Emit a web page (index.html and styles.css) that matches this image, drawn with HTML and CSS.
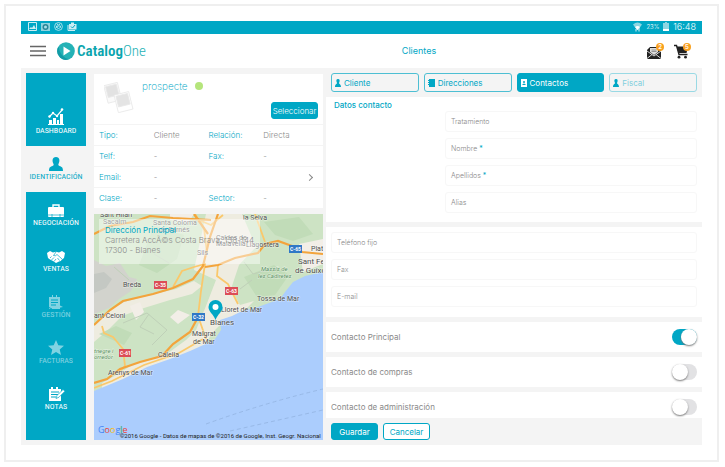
FILE: index.html
```html
<!DOCTYPE html>
<html lang="es">
<head>
<meta charset="utf-8">
<meta name="viewport" content="width=device-width, initial-scale=1">
<title>CatalogOne - Clientes</title>
<link rel="stylesheet" href="styles.css">
</head>
<body>
<div class="frame">
<div class="app">
  <div class="status">
    <div class="status-group">
      <svg width="9" height="9" viewBox="0 0 9 9"><path d="M.5.5h8v8h-8z" fill="none" stroke="#fff"/><path d="M1 7l2-2 1 1 2-3 2 4z" fill="#fff"/></svg>
      <svg width="9" height="9" viewBox="0 0 9 9"><path d="M0 1h9v8H0z" fill="#b5dfe6"/><circle cx="4.500" cy="5" r="3" fill="#347f8d"/><circle cx="4.500" cy="5" r="1.500" fill="#d6eef2"/></svg>
      <svg width="9" height="9" viewBox="0 0 9 9" fill="none" stroke="#fff"><circle cx="4.500" cy="4.500" r="3.900" stroke-width=".8"/><path d="M3 2l1 1h1l1-1M2.500 5.500V4h4v1.500q-2 2-4 0zM3 4v2" stroke-width=".8"/></svg>
      <svg width="10" height="9" viewBox="0 0 10 9"><path d="M1 3v5.500h7" fill="none" stroke="#fff"/><path d="M2 2h2V.5h3V2h2.500v5.500H2z" fill="#fff"/><path d="M4 4.500L5.500 6 8 3" fill="none" stroke="#00a7c5"/></svg>
    </div>
    <div class="status-group">
      <svg width="9" height="10" viewBox="0 0 9 10"><path d="M0 2.500Q4.500-1.500 9 2.500L5 8H4z" fill="#8ed6e2"/><path d="M2 5q2.500-2 5 0L4.500 8z" fill="#fff"/><path d="M3 7v2.500M6 6v3.500" stroke="#d8f2f5"/></svg>
      <span class="battery-text">23%</span>
      <svg width="6" height="9" viewBox="0 0 6 9"><path d="M2 0h2v1h2v8H0V1h2z" fill="#8ed6e2"/><path d="M0 7h6v2H0z" fill="#fff"/></svg>
      <span class="clock">16:48</span>
    </div>
  </div>

  <header class="header">
    <div class="brand">
      <button class="icon-button" aria-label="Menú"><svg width="16" height="12" viewBox="0 0 16 12" stroke="#666" stroke-width="1.500"><path d="M0 1.500h16M0 6h16M0 10.500h16"/></svg></button>
      <svg width="18" height="18" viewBox="0 0 18 18"><circle cx="9" cy="9" r="8.800" fill="#25b2b6"/><path d="M1.500 4.500A8.800 8.800 0 0 0 12 17.300Q3 15 1.500 4.500z" fill="#129ba6"/><path d="M6.500 4.500v9l7-4.500z" fill="#fff"/></svg>
      <span class="wordmark"><b>Catalog</b>One</span>
    </div>
    <h1 class="title">Clientes</h1>
    <div class="actions">
      <button class="icon-button" aria-label="Mensajes">
        <svg width="14" height="15" viewBox="0 0 14 15"><path d="M0 6l3-3h8l3 3v9H0z" fill="#222"/><path d="M3 4h8v4L7 11 3 8z" fill="#ddd"/><path d="M0 7l7 5 7-5M0 14.500l5-4M14 14.500l-5-4" fill="none" stroke="#fff" stroke-width=".8"/><path d="M4.500 6h5M4.500 7.500h5" stroke="#666" stroke-width=".6"/></svg>
        <span class="badge">2</span>
      </button>
      <button class="icon-button" aria-label="Carrito">
        <svg width="14" height="15" viewBox="0 0 14 15"><path d="M0 1.500h2.500L5 10.500h8.500" fill="none" stroke="#222" stroke-width="1.400"/><path d="M2.700 2.500H14L12.500 9H4.500z" fill="#222"/><circle cx="5" cy="13.200" r="1.400" fill="#222"/><circle cx="11.500" cy="13.200" r="1.400" fill="#222"/></svg>
        <span class="badge">5</span>
      </button>
    </div>
  </header>

  <div class="body">
    <nav class="sidebar">
      <a class="nav-item nav-first" href="#">
        <svg width="16" height="17" viewBox="0 0 16 17"><path d="M1 12h3v4H1zM5 10h3v6H5zM9 12h2v4H9zM12 6h3v10h-3z" fill="#fff"/><path d="M1 9l4-4 4 3 5-6" fill="none" stroke="#fff" stroke-width="1.200"/><g fill="#fff"><circle cx="1.500" cy="8.500" r="1.200"/><circle cx="5" cy="5" r="1.200"/><circle cx="9" cy="8" r="1.200"/><circle cx="14" cy="1.500" r="1.300"/></g><path d="M0 16.500h16" stroke="#fff"/></svg>
        <span>DASHBOARD</span></a>
      <a class="nav-item nav-active" href="#">
        <svg width="14" height="14" viewBox="0 0 14 14"><path d="M7 0c4 0 4 4 2.500 7-.5 1 0 1.500 1 2 2 .8 3.500 1 3.500 5H0c0-4 1.500-4.200 3.500-5 1-.5 1.500-1 1-2C3 4 3 0 7 0z" fill="currentColor"/></svg>
        <span>IDENTIFICACIÓN</span></a>
      <a class="nav-item" href="#">
        <svg width="16" height="13" viewBox="0 0 16 13"><path d="M5 3V1h6v2" fill="none" stroke="#fff" stroke-width="1.400"/><rect y="3" width="16" height="10" rx="1" fill="#fff"/><path d="M0 11h16M4 10v3M12 10v3" stroke="#00a7c5" stroke-width=".7"/></svg>
        <span>NEGOCIACIÓN</span></a>
      <a class="nav-item" href="#">
        <svg width="18" height="12" viewBox="0 0 18 12"><path d="M0 2l3-2 3 1.500 3-.7L12 1.500 15 0l3 2-1 5-2 1.500q-1 2-3 2l-3 1.500-3-2-3-1.500L1 7z" fill="#fff"/><path d="M9 1L6.500 4.500q2 1 3.500-1l5 4.500M3 7l1.500-1.500M4.500 9L7 6.500M7 10.500L9 8M10.500 7l2 2.500" fill="none" stroke="#00a7c5" stroke-width=".7"/></svg>
        <span>VENTAS</span></a>
      <a class="nav-item nav-dim" href="#">
        <svg width="16" height="14" viewBox="0 0 16 14"><path d="M1 2h3V0h1v2h3V0h1v2h3v12H1z" fill="#fff"/><path d="M3 5h7M3 7.500h7M3 10h5M0 12l4 2" stroke="#00a7c5"/><path d="M10 13l1-3 4 2z" fill="#fff"/></svg>
        <span>GESTIÓN</span></a>
      <a class="nav-item nav-dim" href="#">
        <svg width="16" height="15" viewBox="0 0 16 15"><path d="M8 0l2.300 5.200L16 5.700l-4.300 3.700L13 15l-5-3-5 3 1.300-5.600L0 5.700l5.700-.5z" fill="#fff"/></svg>
        <span>FACTURAS</span></a>
      <a class="nav-item" href="#">
        <svg width="17" height="14" viewBox="0 0 17 14"><path d="M1 2h2V0h2v2h3V0h2v2h3v12H1z" fill="#fff"/><path d="M3 5h8M3 7.500h7M3 10h5" stroke="#00a7c5"/><path d="M8 11.500l1-3L15 2.500l2 1.700-6 6z" fill="#fff" stroke="#00a7c5" stroke-width=".7"/></svg>
        <span>NOTAS</span></a>
    </nav>

    <section class="summary">
      <div class="card">
        <div class="customer">
          <svg width="30" height="31" viewBox="0 0 30 31"><g stroke="#e8e8e8" stroke-width=".8"><g transform="rotate(-14 8 12)"><path d="M2 2h14v18H2z" fill="#fafafa"/><path d="M3.500 3.500h11v11h-11z" fill="#e2e2e2"/></g><g transform="rotate(-14 20 20)"><path d="M12 11h15v18H12z" fill="#fff"/><path d="M13.500 12.500h12v11h-12z" fill="#e4e4e4"/></g></g></svg>
          <p class="customer-name">prospecte <i class="dot"></i></p>
          <button class="button button-solid select">Seleccionar</button>
        </div>
        <dl class="row"><dt>Tipo:</dt><dd>Cliente</dd><dt>Relación:</dt><dd>Directa</dd></dl>
        <dl class="row"><dt>Telf:</dt><dd>-</dd><dt>Fax:</dt><dd>-</dd></dl>
        <dl class="row row-link"><dt>Email:</dt><dd>-</dd></dl>
        <dl class="row"><dt>Clase:</dt><dd>-</dd><dt>Sector:</dt><dd>-</dd></dl>
      </div>

      <div class="map">
        <svg class="map-art" viewBox="0 0 229 226" preserveAspectRatio="xMidYMid slice">
          <path d="M0 0h229v226H0z" fill="#cde3c4"/>
          <path d="M0 46l12 6 14-3 9 14 8 2-6 12-12 8-10 9-15 6z" fill="#d2d3cd"/>
          <path d="M0 60l10-2 8 7-6 9-12 5z" fill="#c4c8c3"/>
          <path d="M60 96l-22 10-14 17-10 16 14 8 24-8 26-12 14-24z" fill="#cde3c4"/>
          <path d="M0 112l16-16 14-8 30-8 22-5 18-8 8 5-10 8-22 6-26 8-22 8-14 14-14 12zM100 56l12-56h36l14 33-17 18-8 24 9 16 14-4-14 14-14 4-14 14-10 18-24 14-34 6-18 16-24 4v-8l16-9 14-9 32-9 22-16 10-10 10-24 10-26z" fill="#eeece0"/>
          <path d="M76 0h24l-6 9-18-3zM36 92l10-4 4 10-8 8zM84 96l12 5-12 9-8-7zM205 30l24-5v25l-20 8z" fill="#f2eee7"/>
          <path d="M60 12l30 9-7 24-20 14-18-8zM5 120l17-8 16 7-8 12zM170 8l35-5 14 17-20 7-18-6zM150 63l30-12 15 10-14 20-18 2z" fill="#c1dcb8"/>
          <path d="M20 53l15 13M29 109l24-10 20 17-15 15M55 100l-9 13 14 7M150 48l9 12 15-4M146 75l12-9M60 40l15 9" fill="none" stroke="#bfd0b8"/>
          <path d="M229 58l-18 4-12 6-8 10-5 7-22 8-16 4-10 5-12 4 1 10-6 9-5 3-20 9-20 8-23 8-24 12-29 12v49h229z" fill="#abcdfd"/>
          <path d="M112 210q58-21 117-35M136 217l93-21" fill="none" stroke="#98b9e7" stroke-dasharray="4 3"/>
          <g fill="none" stroke="#fac86b" stroke-width="1.800">
            <path d="M8 112l2 7 9 4 10 12 2 17-7 7M0 174l18-7 32-16 35-12 24-14M79 73l9-16 12-4 11-3-4 27-3 25M101 0l9 14 3 25M124 51l-1 11 11 8 10 20M161 0l10 28M107 7l10 4 12-10M104 102l8 23"/>
          </g>
          <g fill="none" stroke="#f3a43c" stroke-width="2.200">
            <path d="M0 111l16-15 13-9 30-7 20-6 20-9 10-13 7-29 8-23M0 20l16-8 23-4 17-6 23 2 38 2M100 0l14 20M111 53l13-2 17-7 23-5 7-9 13-3 14 5 10 6 21 2M0 169l13-4 13-10 20-7 22-6 11-12 17-12 7-13"/>
          </g>
          <g class="map-label">
            <text x="6" y="3">Sant Hilari</text><text x="9" y="10">Sacalm</text><text x="59" y="11">Santa Coloma</text><text x="65" y="18">de Farnés</text><text x="149" y="6">la Selva</text><text x="122" y="26">Caldes de</text><text x="122" y="32">Malavella</text><text x="152" y="33">Llagostera</text><text x="103" y="41">Sils</text><text x="217" y="37">Plat</text><text x="29" y="73">Breda</text><text x="0" y="104">ant Celoni</text><text x="163" y="87">Tossa de Mar</text><text x="127" y="98">Lloret de Mar</text><text x="98" y="122">Malgrat</text><text x="99" y="130">de Mar</text><text x="64" y="143">Calella</text><text x="14" y="161">Arenys de Mar</text>
          </g>
          <g class="map-label map-town"><text x="204" y="50">Sant Fe</text><text x="201" y="59">de Guíxo</text><text x="116" y="111">Blanes</text></g>
          <g class="map-label map-area"><text x="167" y="57">Massís de</text><text x="164" y="64">les Cadiretes</text><text x="0" y="139">tnegre i</text><text x="0" y="145">orredor</text></g>
          <g class="map-road"><g fill="#dc4d57"><path d="M60 67h13v8H60zM131 73h13v8h-13zM25 135h12v8H25z"/></g><path d="M98 99h13v8H98zM195 31h13v8h-13z" fill="#3078c6"/><text x="61" y="73">C-35</text><text x="132" y="79">C-63</text><text x="26" y="141">C-61</text><text x="99" y="105">C-32</text><text x="196" y="37">C-65</text></g>
          <path d="M121.500 106c-2-6-7-8-7-13a7 7 0 0 1 14 0c0 5-5 7-7 13z" fill="#00a7c5"/><circle cx="121.500" cy="93" r="3" fill="#fff"/>
        </svg>
        <address class="address"><strong>Dirección Principal</strong><span>Carretera AccÃ©s Costa Brava, 138-144</span><span>17300 - Blanes</span></address>
        <div class="map-foot"><span class="google"><i class="g-blue">G</i><i class="g-red">o</i><i class="g-yellow">o</i><i class="g-blue">g</i><i class="g-green">l</i><i class="g-red">e</i></span><small>©2016 Google - Datos de mapas de ©2016 de Google, Inst. Geogr. Nacional</small></div>
      </div>
    </section>

    <main class="detail">
      <nav class="tabs">
        <button class="tab"><svg width="6" height="8" viewBox="0 0 6 8"><path d="M3 0c2 0 2 2 1 4 0 1 2 1 2 4H0c0-3 2-3 2-4-1-2-1-4 1-4z" fill="currentColor"/></svg>Cliente</button>
        <button class="tab"><svg width="7" height="8" viewBox="0 0 7 8"><path d="M1 0h6v8H1zM0 1h1v1H0zM0 3h1v1H0zM0 5h1v1H0z" fill="currentColor"/></svg>Direcciones</button>
        <button class="tab tab-on"><svg width="6" height="8" viewBox="0 0 6 8"><path d="M0 0h6v8H0z" fill="#fff"/><circle cx="3" cy="3" r="1" fill="#00a7c5"/><path d="M1 6q2-3 4 0z" fill="#00a7c5"/></svg>Contactos</button>
        <button class="tab tab-dim"><svg width="6" height="8" viewBox="0 0 6 8"><path d="M3 0c2 0 2 2 1 4 0 1 2 1 2 4H0c0-3 2-3 2-4-1-2-1-4 1-4z" fill="#00a7c5"/></svg>Fiscal</button>
      </nav>
      <form class="form">
        <section class="panel panel-contact">
          <h2 class="panel-title">Datos contacto</h2>
          <div class="fields">
            <label class="field">Tratamiento<input type="text"></label>
            <label class="field"><span>Nombre <b>*</b></span><input type="text"></label>
            <label class="field"><span>Apellidos <b>*</b></span><input type="text"></label>
            <label class="field">Alias<input type="text"></label>
          </div>
        </section>
        <section class="panel fields">
          <label class="field">Teléfono fijo<input type="tel"></label>
          <label class="field">Fax<input type="tel"></label>
          <label class="field">E-mail<input type="email"></label>
        </section>
        <label class="panel option">Contacto Principal<input class="switch" type="checkbox" checked></label>
        <label class="panel option">Contacto de compras<input class="switch" type="checkbox"></label>
        <label class="panel option">Contacto de administración<input class="switch" type="checkbox"></label>
        <div class="footer">
          <button class="button button-solid" type="button">Guardar</button>
          <button class="button" type="button">Cancelar</button>
        </div>
      </form>
    </main>
  </div>
</div>
</div>
</body>
</html>
```
FILE: styles.css
```css
:root {
  --teal: #00a7c5;
  --surface: #f4f4f4;
  --grey: #8a8a8a;
}
* { box-sizing: border-box; }
body {
  margin: 0;
  padding: 4px 6px 4px 4px;
  background: #fff;
  font: 300 8px/10px Inter, "Liberation Sans", sans-serif;
  color: var(--grey);
}
h1, h2, p, dl, dd { margin: 0; }
button, input { font: inherit; color: inherit; }
button { padding: 0; border: 0; background: none; }
a { text-decoration: none; }
svg { display: block; flex: none; }
i { font-style: normal; }

.frame { border: 2px solid #efefef; padding: 15px; }
.app { background: var(--surface); }

.status {
  display: flex;
  justify-content: space-between;
  height: 13px;
  padding: 0 6px 2px 7px;
  background: var(--teal);
  color: #fff;
}
.status-group { display: flex; align-items: center; gap: 4px; }
.status-group:first-child { opacity: .8; }
.battery-text { font-size: 6px; }
.clock { font-size: 9px; }

.header {
  display: grid;
  grid-template-columns: 1fr auto 1fr;
  align-items: center;
  height: 34px;
  padding: 0 14px 0 9px;
  background: #fff;
}
.brand { display: flex; align-items: center; gap: 11px; }
.wordmark {
  margin-left: -9px;
  font: 300 15px/20px "Roboto Condensed", "Liberation Sans Narrow", Roboto, sans-serif;
  color: #25b2b6;
}
.wordmark b { font-weight: 600; color: #0aa5ae; }
.title { padding-left: 120px; font-size: 9px; font-weight: 400; color: var(--teal); }
.actions { display: flex; justify-content: flex-end; gap: 13px; }
.icon-button { position: relative; }
.badge {
  position: absolute;
  top: -1px;
  right: -3px;
  width: 8px;
  border-radius: 50%;
  background: #f9a11f;
  font-size: 6px;
  font-weight: 600;
  line-height: 8px;
  color: #fff;
}

.body {
  display: grid;
  grid-template-columns: 60px minmax(0, 240fr) minmax(0, 376fr);
  padding-left: 5px;
}

.sidebar { margin: 5px 0; background: var(--teal); }
.nav-item {
  display: flex;
  flex-direction: column;
  align-items: center;
  justify-content: flex-end;
  gap: 1px;
  height: 46px;
  padding-bottom: 10px;
  font: 400 8px/10px "Roboto Condensed", "Liberation Sans Narrow", Roboto, sans-serif;
  color: #fff;
}
.nav-first { height: 73px; }
.nav-active { background: var(--surface); color: var(--teal); }
.nav-dim > * { opacity: .5; }

.summary { display: flex; flex-direction: column; gap: 6px; margin: 6px 3px 5px 8px; }
.card { background: #fff; }
.customer { display: flex; height: 50px; padding: 6px 5px 5px 10px; }
.customer svg { margin-top: 2px; }
.customer-name { padding-left: 8px; font-size: 10px; font-weight: 200; line-height: 12px; color: var(--teal); }
.dot { display: inline-block; width: 8px; height: 8px; margin-left: 5px; border-radius: 50%; background: #b5e57c; }
.button.select { align-self: flex-end; margin-left: auto; font-weight: 300; }
.row {
  display: grid;
  grid-template-columns: repeat(4, 1fr);
  align-items: center;
  height: 21px;
  padding: 0 5px;
  border-top: 1px solid #f4f4f4;
}
.row dt { color: var(--teal); }
.row-link::after {
  content: "";
  grid-column: 4;
  justify-self: end;
  width: 4px;
  height: 4px;
  margin-right: 6px;
  border: solid #888;
  border-width: 1px 1px 0 0;
  transform: rotate(45deg);
}

.button {
  height: 17px;
  min-width: 47px;
  border: 1px solid var(--teal);
  border-radius: 3px;
  background: #fff;
  font-weight: 400;
  color: var(--teal);
}
.button-solid { background: var(--teal); color: #fff; }

.map { position: relative; flex: 1; min-height: 226px; overflow: hidden; }
.map-art { position: absolute; inset: 0; width: 100%; height: 100%; }
.map-label { font: 400 7px Roboto, sans-serif; fill: #4e4e4e; stroke: #fff; stroke-width: 1px; stroke-opacity: .5; paint-order: stroke; }
.map-town { font-size: 8px; }
.map-area { font-size: 6px; font-style: italic; fill: #5a9062; }
.map-road { font: 700 5px Roboto, sans-serif; }
.map-road text { fill: #fff; }
.address {
  position: absolute;
  top: 5px;
  left: 5px;
  display: flex;
  flex-direction: column;
  padding: 6px 6px 9px;
  background: rgb(255 255 255 / 45%);
  font-style: normal;
}
.address strong { font-weight: 400; color: var(--teal); }
.map-foot {
  position: absolute;
  right: 0;
  bottom: 0;
  left: 4px;
  display: flex;
  align-items: flex-end;
}
.google { font: 500 9px/20px "Open Sans", sans-serif; }
.map-foot small { margin-left: -8px; font: 400 6px/8px Roboto, sans-serif; color: #222; white-space: nowrap; }
.g-blue { color: #4285f4; }
.g-red { color: #ea4335; }
.g-yellow { color: #fbbc05; }
.g-green { color: #34a853; }

.tabs { display: grid; grid-template-columns: repeat(4, 1fr); gap: 5px; padding: 5px; }
.tab {
  display: flex;
  align-items: center;
  gap: 3px;
  height: 19px;
  padding: 0 3px;
  border: 1px solid #4dbfd3;
  border-radius: 3px;
  font-weight: 400;
  color: var(--teal);
}
.tab-on { border-color: var(--teal); background: var(--teal); color: #fff; }
.tab-dim { border-color: #99d9e4; color: #80cfdd; }

.form { display: flex; flex-direction: column; gap: 5px; }
.panel { padding: 5px; background: #fff; }
.panel-contact { display: grid; grid-template-columns: 114px 1fr; min-height: 125px; }
.panel-title { padding: 0 3px; margin-top: -2px; font-size: 8px; font-weight: 500; line-height: 10px; color: var(--teal); }
.fields { display: flex; flex-direction: column; gap: 6px; }
.panel-contact .fields { padding-top: 9px; }
.panel.fields { min-height: 90px; }
.field {
  display: flex;
  align-items: center;
  gap: 4px;
  height: 21px;
  padding: 0 5px;
  border: 1px solid #f7f7f7;
  border-radius: 3px;
  font-size: 7px;
}
.field b { color: var(--teal); }
.field input { flex: 1; min-width: 0; border: 0; outline: 0; background: none; }
.option { display: flex; align-items: center; justify-content: space-between; height: 30px; font-weight: 400; }
.switch {
  appearance: none;
  display: flex;
  width: 25px;
  height: 16px;
  margin: 0;
  border-radius: 8px;
  background: #e2e2e4;
}
.switch::before {
  content: "";
  width: 16px;
  height: 16px;
  border-radius: 50%;
  background: #fff;
  box-shadow: 0 1px 2px #777;
}
.switch:checked { justify-content: flex-end; background: var(--teal); }

.footer { position: relative; display: flex; gap: 5px; margin-top: -9px; padding: 5px; background: var(--surface); }
```
